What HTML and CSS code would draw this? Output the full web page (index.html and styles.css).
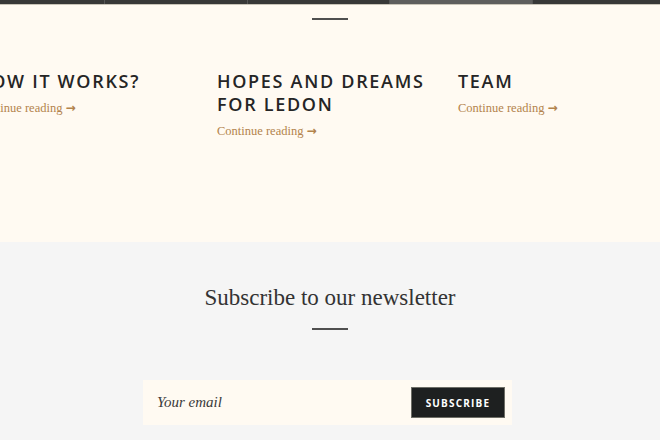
FILE: index.html
```html
<!DOCTYPE html>
<html>
<head>
    <meta charset="utf-8">
    <meta name="viewport" content="width=device-width, initial-scale=1">
    <title>Blog</title>
    <link rel="stylesheet" href="styles.css">
</head>
<body>
    <section class="blog">
        <div class="strip">
            <div class="seg seg-a"></div>
            <div class="seg seg-b"></div>
            <div class="seg seg-c"></div>
            <div class="seg seg-d active"></div>
            <div class="seg seg-e"></div>
        </div>
        <div class="divider top-divider"></div>

        <div class="posts">
            <div class="post">
                <h3 class="post-title">How it works?</h3>
                <a href="#" class="more">Continue reading <span class="arrow">&rarr;</span></a>
            </div>
            <div class="post">
                <h3 class="post-title">Hopes and dreams for Ledon</h3>
                <a href="#" class="more">Continue reading <span class="arrow">&rarr;</span></a>
            </div>
            <div class="post">
                <h3 class="post-title">Team</h3>
                <a href="#" class="more">Continue reading <span class="arrow">&rarr;</span></a>
            </div>
        </div>
    </section>

    <!-- newsletter -->
    <section class="newsletter">
        <h2 class="news-title">Subscribe to our newsletter</h2>
        <div class="divider"></div>
        <form class="news-form">
            <input type="email" class="news-input" placeholder="Your email">
            <button type="button" class="news-btn">Subscribe</button>
        </form>
    </section>
</body>
</html>
```

FILE: styles.css
```css
* {
    box-sizing: border-box;
}
html, body {
    margin: 0;
    padding: 0;
    overflow: hidden;
}
body {
    width: 660px;
    height: 440px;
    background: #f5f5f5;
}

.blog {
    background: #fffaf2;
    height: 242px;
}
.strip {
    display: flex;
    height: 5px;
    border-bottom: 1px solid #c9c4b8;
}
.seg {
    background: #383838;
    border-right: 1px solid #555;
}
.seg-a { width: 105px; }
.seg-b { width: 143px; }
.seg-c { width: 142px; }
.seg-d { width: 143px; }
.seg-e { flex: 1; border-right: none; }
.seg.active {
    background: #5e5e5e;
}

.divider {
    width: 36px;
    height: 2px;
    background: #4f4f4f;
    margin: 0 auto;
}
.top-divider {
    margin-top: 13px;
}

.posts {
    display: flex;
    margin-left: -24px;
    padding-top: 50px;
}
.post {
    width: 241px;
    flex: none;
    padding-right: 10px;
}
.post-title {
    margin: 0;
    font-family: "Open Sans", sans-serif;
    font-weight: 600;
    font-size: 18px;
    line-height: 23px;
    letter-spacing: 1.7px;
    text-transform: uppercase;
    color: #252525;
}
.more {
    display: inline-block;
    margin-top: 8px;
    font-family: "Liberation Serif", serif;
    font-size: 12.5px;
    color: #b3834c;
    text-decoration: none;
}
.arrow {
    font-family: "DejaVu Sans", sans-serif;
    font-weight: bold;
    font-size: 12px;
}

.newsletter {
    padding-top: 43px;
    text-align: center;
}
.news-title {
    margin: 0 0 17px;
    font-family: "Liberation Serif", serif;
    font-weight: normal;
    font-size: 23px;
    line-height: 26px;
    color: #333;
}
.news-form {
    display: flex;
    align-items: center;
    width: 369px;
    height: 45px;
    margin: 50px 0 0 143px;
    padding: 0 7px 0 14px;
    background: #fffaf2;
}
.news-input {
    flex: 1;
    border: none;
    background: transparent;
    font-family: "Liberation Serif", serif;
    font-style: italic;
    font-size: 15px;
    color: #333;
    outline: none;
    padding: 0;
}
.news-input::placeholder {
    color: #3a3a3a;
}
.news-btn {
    width: 94px;
    height: 31px;
    background: #1e2020;
    border: 1px solid #6e6e66;
    color: white;
    font-family: "Open Sans", sans-serif;
    font-weight: 700;
    font-size: 10px;
    letter-spacing: 1.2px;
    text-transform: uppercase;
    padding: 0;
}
```
